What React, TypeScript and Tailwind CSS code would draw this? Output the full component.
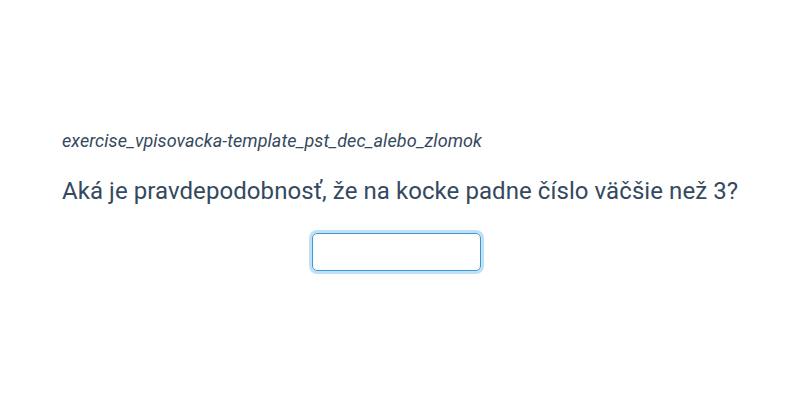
import React from 'react';

const App = () => {
    return (
        <div className="w-[800px] h-[400px] bg-white font-['Roboto',sans-serif] text-[#34495e]">
            <div className="pl-[62px] pr-[69px] pt-[128px]">
                <p className="text-[18px] italic leading-[26px] tracking-[0.07px]">exercise_vpisovacka-template_pst_dec_alebo_zlomok</p>
                <p className="mt-[21px] text-[24px] leading-[32px] whitespace-nowrap tracking-[0.07px]">Aká je pravdepodobnosť, že na kocke padne číslo väčšie než 3?</p>
                <div className="mt-[26px] flex justify-center">
                    <input
                        type="text"
                        className="w-[169px] h-[38px] rounded-[5px] border border-[#3a98db] outline-none ring-[3px] ring-[#c2e0f4] px-2 text-[18px]"
                    />
                </div>
            </div>
        </div>
    );
};

export default App;
